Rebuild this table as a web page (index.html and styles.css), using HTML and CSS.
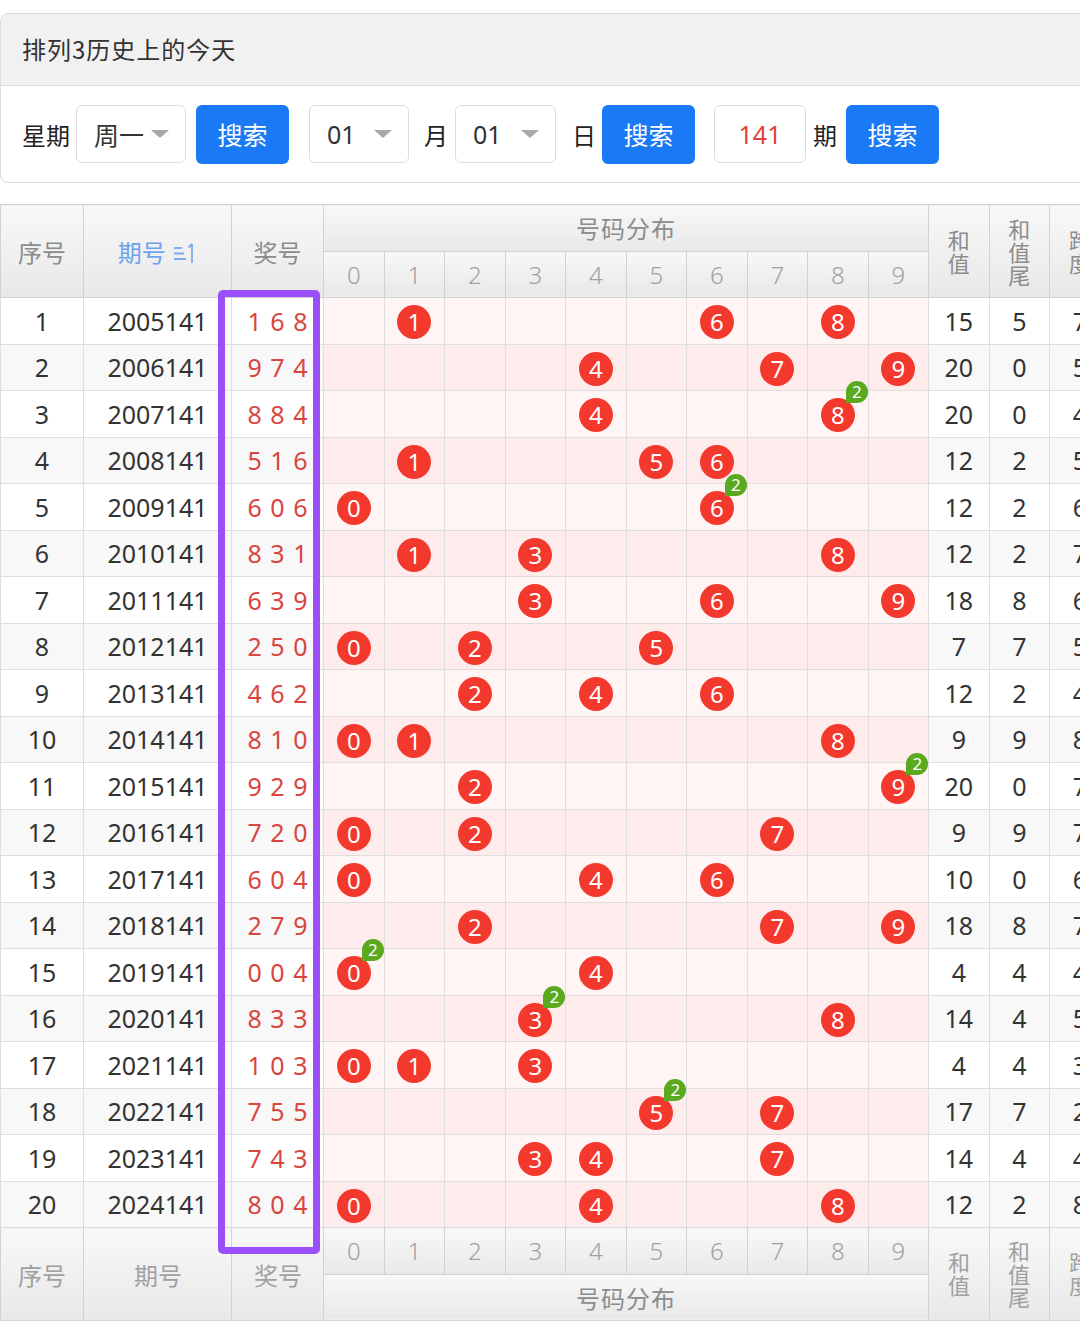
FILE: index.html
```html
<!DOCTYPE html>
<html lang="zh-CN">
<head>
<meta charset="utf-8">
<title>排列3历史上的今天</title>
<link rel="stylesheet" href="styles.css">
</head>
<body>
<div class="card">
  <div class="card-head">排列3历史上的今天</div>
  <div class="controls">
    <span class="lbl">星期</span>
    <div class="sel w110"><span>周一</span><i class="caret"></i></div>
    <button class="btn">搜索</button>
    <div class="sel w100 ml20"><span>01</span><i class="caret"></i></div>
    <span class="lbl yue">月</span>
    <div class="sel w101"><span>01</span><i class="caret"></i></div>
    <span class="lbl ri">日</span>
    <button class="btn nm">搜索</button>
    <div class="inp">141</div>
    <span class="lbl qi">期</span>
    <button class="btn nm">搜索</button>
  </div>
</div>

<div class="tbl-wrap">
<table class="chart">
  <colgroup>
    <col class="c-seq"><col class="c-iss"><col class="c-win">
    <col class="c-d"><col class="c-d"><col class="c-d"><col class="c-d"><col class="c-d">
    <col class="c-d"><col class="c-d"><col class="c-d"><col class="c-d"><col class="c-d">
    <col class="c-s"><col class="c-s"><col class="c-s">
  </colgroup>
  <thead>
    <tr>
      <th rowspan="2">序号</th>
      <th rowspan="2" class="sort">期号 <svg class="sort-ic" width="26" height="26" viewBox="0 0 26 26"><path d="M3 8h8M3 13.5h10M3 19h12" stroke="#7ea9ea" stroke-width="1.8" fill="none"/><path d="M21 23V4M21 4l-3.5 3.5" stroke="#7ea9ea" stroke-width="1.8" fill="none"/></svg></th>
      <th rowspan="2">奖号</th>
      <th colspan="10" class="grp">号码分布</th>
      <th rowspan="2" class="vt">和<br>值</th>
      <th rowspan="2" class="vt">和<br>值<br>尾</th>
      <th rowspan="2" class="vt">跨<br>度</th>
    </tr>
    <tr class="digits">
      <th>0</th><th>1</th><th>2</th><th>3</th><th>4</th><th>5</th><th>6</th><th>7</th><th>8</th><th>9</th>
    </tr>
  </thead>
  <tbody>
    <tr><td>1</td><td>2005141</td><td class="win">1 6 8</td><td class="d"></td><td class="d"><span class="ball">1</span></td><td class="d"></td><td class="d"></td><td class="d"></td><td class="d"></td><td class="d"><span class="ball">6</span></td><td class="d"></td><td class="d"><span class="ball">8</span></td><td class="d"></td><td>15</td><td>5</td><td>7</td></tr>
    <tr><td>2</td><td>2006141</td><td class="win">9 7 4</td><td class="d"></td><td class="d"></td><td class="d"></td><td class="d"></td><td class="d"><span class="ball">4</span></td><td class="d"></td><td class="d"></td><td class="d"><span class="ball">7</span></td><td class="d"></td><td class="d"><span class="ball">9</span></td><td>20</td><td>0</td><td>5</td></tr>
    <tr><td>3</td><td>2007141</td><td class="win">8 8 4</td><td class="d"></td><td class="d"></td><td class="d"></td><td class="d"></td><td class="d"><span class="ball">4</span></td><td class="d"></td><td class="d"></td><td class="d"></td><td class="d"><span class="ball">8<b class="badge">2</b></span></td><td class="d"></td><td>20</td><td>0</td><td>4</td></tr>
    <tr><td>4</td><td>2008141</td><td class="win">5 1 6</td><td class="d"></td><td class="d"><span class="ball">1</span></td><td class="d"></td><td class="d"></td><td class="d"></td><td class="d"><span class="ball">5</span></td><td class="d"><span class="ball">6</span></td><td class="d"></td><td class="d"></td><td class="d"></td><td>12</td><td>2</td><td>5</td></tr>
    <tr><td>5</td><td>2009141</td><td class="win">6 0 6</td><td class="d"><span class="ball">0</span></td><td class="d"></td><td class="d"></td><td class="d"></td><td class="d"></td><td class="d"></td><td class="d"><span class="ball">6<b class="badge">2</b></span></td><td class="d"></td><td class="d"></td><td class="d"></td><td>12</td><td>2</td><td>6</td></tr>
    <tr><td>6</td><td>2010141</td><td class="win">8 3 1</td><td class="d"></td><td class="d"><span class="ball">1</span></td><td class="d"></td><td class="d"><span class="ball">3</span></td><td class="d"></td><td class="d"></td><td class="d"></td><td class="d"></td><td class="d"><span class="ball">8</span></td><td class="d"></td><td>12</td><td>2</td><td>7</td></tr>
    <tr><td>7</td><td>2011141</td><td class="win">6 3 9</td><td class="d"></td><td class="d"></td><td class="d"></td><td class="d"><span class="ball">3</span></td><td class="d"></td><td class="d"></td><td class="d"><span class="ball">6</span></td><td class="d"></td><td class="d"></td><td class="d"><span class="ball">9</span></td><td>18</td><td>8</td><td>6</td></tr>
    <tr><td>8</td><td>2012141</td><td class="win">2 5 0</td><td class="d"><span class="ball">0</span></td><td class="d"></td><td class="d"><span class="ball">2</span></td><td class="d"></td><td class="d"></td><td class="d"><span class="ball">5</span></td><td class="d"></td><td class="d"></td><td class="d"></td><td class="d"></td><td>7</td><td>7</td><td>5</td></tr>
    <tr><td>9</td><td>2013141</td><td class="win">4 6 2</td><td class="d"></td><td class="d"></td><td class="d"><span class="ball">2</span></td><td class="d"></td><td class="d"><span class="ball">4</span></td><td class="d"></td><td class="d"><span class="ball">6</span></td><td class="d"></td><td class="d"></td><td class="d"></td><td>12</td><td>2</td><td>4</td></tr>
    <tr><td>10</td><td>2014141</td><td class="win">8 1 0</td><td class="d"><span class="ball">0</span></td><td class="d"><span class="ball">1</span></td><td class="d"></td><td class="d"></td><td class="d"></td><td class="d"></td><td class="d"></td><td class="d"></td><td class="d"><span class="ball">8</span></td><td class="d"></td><td>9</td><td>9</td><td>8</td></tr>
    <tr><td>11</td><td>2015141</td><td class="win">9 2 9</td><td class="d"></td><td class="d"></td><td class="d"><span class="ball">2</span></td><td class="d"></td><td class="d"></td><td class="d"></td><td class="d"></td><td class="d"></td><td class="d"></td><td class="d"><span class="ball">9<b class="badge">2</b></span></td><td>20</td><td>0</td><td>7</td></tr>
    <tr><td>12</td><td>2016141</td><td class="win">7 2 0</td><td class="d"><span class="ball">0</span></td><td class="d"></td><td class="d"><span class="ball">2</span></td><td class="d"></td><td class="d"></td><td class="d"></td><td class="d"></td><td class="d"><span class="ball">7</span></td><td class="d"></td><td class="d"></td><td>9</td><td>9</td><td>7</td></tr>
    <tr><td>13</td><td>2017141</td><td class="win">6 0 4</td><td class="d"><span class="ball">0</span></td><td class="d"></td><td class="d"></td><td class="d"></td><td class="d"><span class="ball">4</span></td><td class="d"></td><td class="d"><span class="ball">6</span></td><td class="d"></td><td class="d"></td><td class="d"></td><td>10</td><td>0</td><td>6</td></tr>
    <tr><td>14</td><td>2018141</td><td class="win">2 7 9</td><td class="d"></td><td class="d"></td><td class="d"><span class="ball">2</span></td><td class="d"></td><td class="d"></td><td class="d"></td><td class="d"></td><td class="d"><span class="ball">7</span></td><td class="d"></td><td class="d"><span class="ball">9</span></td><td>18</td><td>8</td><td>7</td></tr>
    <tr><td>15</td><td>2019141</td><td class="win">0 0 4</td><td class="d"><span class="ball">0<b class="badge">2</b></span></td><td class="d"></td><td class="d"></td><td class="d"></td><td class="d"><span class="ball">4</span></td><td class="d"></td><td class="d"></td><td class="d"></td><td class="d"></td><td class="d"></td><td>4</td><td>4</td><td>4</td></tr>
    <tr><td>16</td><td>2020141</td><td class="win">8 3 3</td><td class="d"></td><td class="d"></td><td class="d"></td><td class="d"><span class="ball">3<b class="badge">2</b></span></td><td class="d"></td><td class="d"></td><td class="d"></td><td class="d"></td><td class="d"><span class="ball">8</span></td><td class="d"></td><td>14</td><td>4</td><td>5</td></tr>
    <tr><td>17</td><td>2021141</td><td class="win">1 0 3</td><td class="d"><span class="ball">0</span></td><td class="d"><span class="ball">1</span></td><td class="d"></td><td class="d"><span class="ball">3</span></td><td class="d"></td><td class="d"></td><td class="d"></td><td class="d"></td><td class="d"></td><td class="d"></td><td>4</td><td>4</td><td>3</td></tr>
    <tr><td>18</td><td>2022141</td><td class="win">7 5 5</td><td class="d"></td><td class="d"></td><td class="d"></td><td class="d"></td><td class="d"></td><td class="d"><span class="ball">5<b class="badge">2</b></span></td><td class="d"></td><td class="d"><span class="ball">7</span></td><td class="d"></td><td class="d"></td><td>17</td><td>7</td><td>2</td></tr>
    <tr><td>19</td><td>2023141</td><td class="win">7 4 3</td><td class="d"></td><td class="d"></td><td class="d"></td><td class="d"><span class="ball">3</span></td><td class="d"><span class="ball">4</span></td><td class="d"></td><td class="d"></td><td class="d"><span class="ball">7</span></td><td class="d"></td><td class="d"></td><td>14</td><td>4</td><td>4</td></tr>
    <tr><td>20</td><td>2024141</td><td class="win">8 0 4</td><td class="d"><span class="ball">0</span></td><td class="d"></td><td class="d"></td><td class="d"></td><td class="d"><span class="ball">4</span></td><td class="d"></td><td class="d"></td><td class="d"></td><td class="d"><span class="ball">8</span></td><td class="d"></td><td>12</td><td>2</td><td>8</td></tr>
  </tbody>
  <tfoot>
    <tr class="digits">
      <th rowspan="2">序号</th>
      <th rowspan="2">期号</th>
      <th rowspan="2">奖号</th>
      <th>0</th><th>1</th><th>2</th><th>3</th><th>4</th><th>5</th><th>6</th><th>7</th><th>8</th><th>9</th>
      <th rowspan="2" class="vt">和<br>值</th>
      <th rowspan="2" class="vt">和<br>值<br>尾</th>
      <th rowspan="2" class="vt">跨<br>度</th>
    </tr>
    <tr>
      <th colspan="10" class="grp">号码分布</th>
    </tr>
  </tfoot>
</table>
<div class="mark"></div>
</div>
</body>
</html>
```

FILE: styles.css
```css
html, body {
  margin: 0;
  padding: 0;
  background: #fff;
}
body {
  width: 1080px;
  overflow: hidden;
  font-family: "Noto Sans", "Noto Sans CJK SC", sans-serif;
  color: #333;
}

/* ---------- search card ---------- */
.card {
  margin-top: 13px;
  margin-right: -30px;
  border: 1px solid #dcdcdc;
  border-radius: 8px;
  overflow: hidden;
}
.card-head {
  height: 71px;
  background: #f1f1f1;
  border-bottom: 1px solid #dcdcdc;
  padding-left: 21px;
  font-family: "Noto Sans CJK SC", sans-serif;
  font-size: 24px;
  letter-spacing: 1px;
  line-height: 70px;
  color: #333;
}
.controls {
  display: flex;
  align-items: center;
  height: 96px;
  padding-left: 21px;
  font-family: "Noto Sans CJK SC", sans-serif;
}
.lbl {
  font-size: 24px;
  color: #222;
  margin-right: 6px;
}
.lbl.yue {
  margin: 0 7px 0 15px;
}
.lbl.ri {
  margin: 0 6px 0 16px;
}
.lbl.qi {
  margin: 0 9px 0 7px;
}
.sel {
  height: 58px;
  box-sizing: border-box;
  border: 1px solid #dcdcdc;
  border-radius: 6px;
  display: flex;
  align-items: center;
  justify-content: space-between;
  padding: 0 16px 0 17px;
  font-size: 25px;
  color: #333;
  font-family: "Noto Sans", "Noto Sans CJK SC", sans-serif;
}
.w110 { width: 110px; }
.w100 { width: 100px; }
.w101 { width: 101px; }
.ml20 { margin-left: 20px; }
.caret {
  width: 0;
  height: 0;
  border-left: 9px solid transparent;
  border-right: 9px solid transparent;
  border-top: 8px solid #a8a8a8;
}
.btn {
  width: 93px;
  height: 59px;
  margin-left: 10px;
  border: 0;
  border-radius: 6px;
  background: #1a7af6;
  color: #fff;
  font-family: "Noto Sans CJK SC", sans-serif;
  font-size: 25px;
  padding: 0;
}
.btn.nm { margin-left: 0; }
.inp {
  width: 92px;
  height: 58px;
  box-sizing: border-box;
  margin-left: 19px;
  border: 1px solid #dcdcdc;
  border-radius: 6px;
  display: flex;
  align-items: center;
  justify-content: center;
  color: #e0433b;
  font-size: 25px;
  font-family: "Noto Sans", sans-serif;
}

/* ---------- chart table ---------- */
.tbl-wrap {
  position: relative;
  margin-top: 21px;
  width: 1110px;
}
.chart {
  border-collapse: collapse;
  table-layout: fixed;
  width: 1110px;
  font-size: 25px;
}
.c-seq { width: 83px; }
.c-iss { width: 148px; }
.c-win { width: 92px; }
.c-d { width: 60.5px; }
.c-s { width: 60.5px; }

.chart th,
.chart td {
  border: 1px solid #dedede;
  text-align: center;
  vertical-align: middle;
  padding: 0;
  height: 45.5px;
  white-space: nowrap;
}
.chart th {
  font-weight: normal;
  color: #8c8c8c;
  background: linear-gradient(#f8f8f8, #e8e8e8);
  border-color: #d2d2d2;
  font-family: "Noto Sans CJK SC", "Noto Sans", sans-serif;
  font-size: 24px;
}
.chart .digits th {
  font-family: "Noto Sans", sans-serif;
  font-weight: 300;
  color: #a0a0a0;
  font-size: 24px;
}
.chart th.grp {
  letter-spacing: 1px;
}
.chart th.vt {
  font-size: 22px;
  line-height: 23px;
}
.chart th.sort {
  color: #6fa2ee;
}
.sort-ic {
  vertical-align: -4px;
}

.chart td {
  color: #333;
  font-size: 25px;
  background: #fff;
}
.chart td.win {
  color: #d9463f;
  word-spacing: 2px;
}
.chart td.d {
  background: #fff5f5;
}
.chart tbody tr:nth-child(even) td {
  background: #f8f8f8;
}
.chart tbody tr:nth-child(even) td.d {
  background: #feebeb;
}

.ball {
  position: relative;
  display: inline-block;
  width: 34px;
  height: 34px;
  border-radius: 50%;
  background: #f3392d;
  color: #fff;
  font-size: 24px;
  line-height: 34px;
  vertical-align: middle;
}
.badge {
  position: absolute;
  left: 25px;
  top: -17px;
  width: 22px;
  height: 22px;
  border-radius: 50% 50% 50% 0;
  background: #5aa91e;
  color: #fff;
  font-weight: normal;
  font-size: 17px;
  line-height: 22px;
  text-align: center;
  z-index: 2;
}

/* highlighted column annotation */
.mark {
  position: absolute;
  left: 218px;
  top: 86px;
  width: 102px;
  height: 964px;
  box-sizing: border-box;
  border: 7px solid #9b4ff8;
  border-radius: 5px;
  z-index: 3;
  pointer-events: none;
}
```
